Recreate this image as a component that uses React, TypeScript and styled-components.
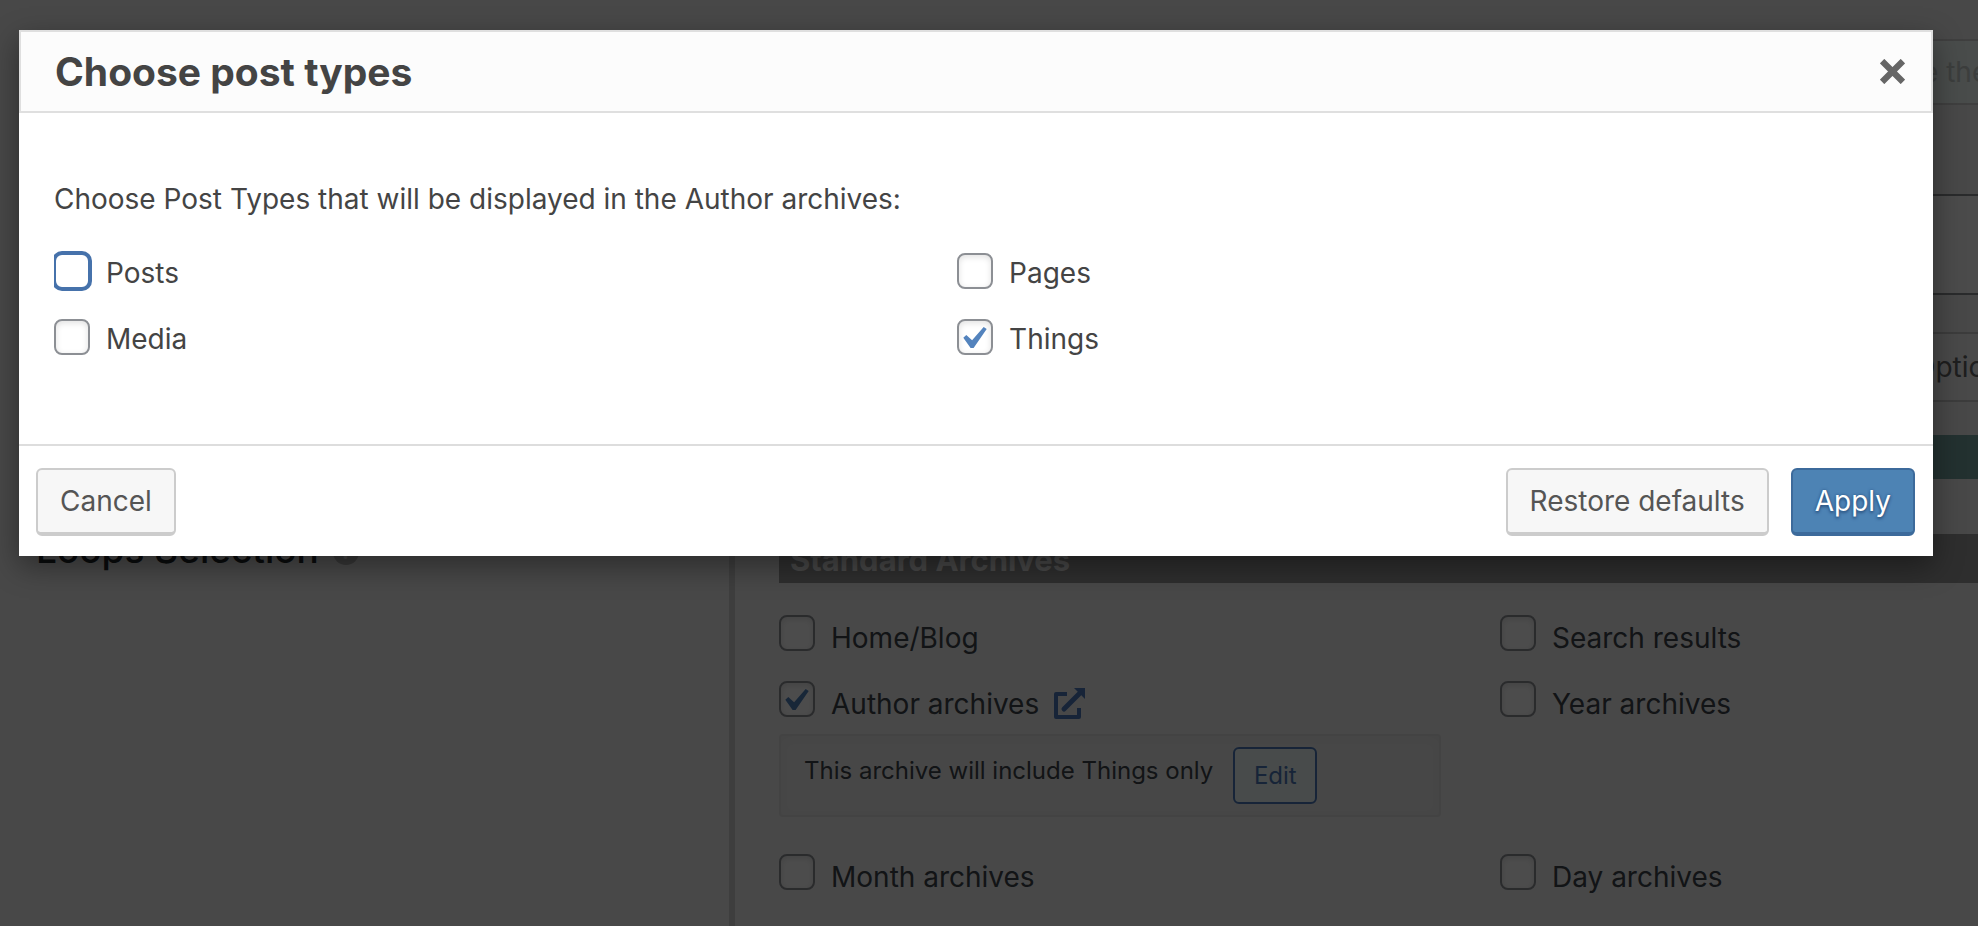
import React from "react";
import styled, { createGlobalStyle, css } from "styled-components";

const GlobalStyle = createGlobalStyle`
  *, *::before, *::after { box-sizing: border-box; }
  body {
    margin: 0;
    background: #f1f1f1;
    color: #444;
    font-family: Inter, "Liberation Sans", sans-serif;
    font-size: 28px;
    line-height: 36px;
  }
  button, input { font: inherit; }
`;

const Screen = styled.div`
  position: relative;
  height: 100vh;
  overflow: hidden;
`;

/* ---------- settings page behind the dialog ---------- */

const Page = styled.div`
  display: flex;
  flex-direction: column;
  min-height: 100%;
  color: #3c434a;
`;

const TopPanel = styled.section`
  padding: 39px 0 23px 779px;
`;

const SettingsSection = styled.section`
  display: grid;
  grid-template-columns: 735px minmax(0, 1fr);
  flex: 1;
`;

const Sidebar = styled.aside`
  display: flex;
  align-items: flex-start;
  gap: 14px;
  padding: 28px 0 0 36px;
  border-right: 6px solid #cfcfcf;
`;

const SectionTitle = styled.h2`
  margin: 0;
  font-size: 37px;
  line-height: 40px;
  font-weight: 500;
  color: #23282d;
`;

const HelpMark = styled.span`
  display: grid;
  place-items: center;
  width: 26px;
  height: 26px;
  margin-top: 9px;
  border-radius: 50%;
  background: #b8b8b8;
  color: #f1f1f1;
  font-size: 20px;
  line-height: 26px;
  font-weight: 700;
`;

const Main = styled.main`
  padding: 32px 0 0 44px;
`;

const Strip = styled.div<{ $height: number; $gap: number; $bg: string; $line?: string }>`
  display: flex;
  justify-content: flex-end;
  align-items: center;
  height: ${(p) => p.$height}px;
  margin-bottom: ${(p) => p.$gap}px;
  background: ${(p) => p.$bg};
  border: 0 solid ${(p) => p.$line ?? "transparent"};
  border-width: ${(p) => (p.$line ? "2px 0" : "0")};
`;

const StripText = styled.span<{ $muted?: boolean }>`
  width: ${(p) => (p.$muted ? 56 : 64)}px;
  overflow: hidden;
  white-space: nowrap;
  color: ${(p) => (p.$muted ? "#c8cfcc" : "#646464")};
`;

const GroupHeading = styled.h3`
  margin: 0;
  padding: 12px 11px 9px;
  background: #999;
  color: #eee;
  font-size: 31px;
  line-height: 28px;
  font-weight: 700;
`;

const ArchiveGrid = styled.div`
  display: grid;
  grid-template-columns: minmax(0, 721fr) minmax(0, 478fr);
  row-gap: 30px;
  padding-top: 32px;
`;

const OptionRow = styled.div`
  display: flex;
  align-items: flex-start;
  gap: 15px;
  height: 36px;
`;

const ArchiveLink = styled.a`
  display: block;
  margin-top: 7px;
  color: #4d7bbb;
  svg { display: block; }
`;

const Note = styled.div`
  display: flex;
  align-items: flex-start;
  gap: 20px;
  margin: 17px 59px 7px 0;
  padding: 11px 23px;
  border: 2px solid #e0e0e0;
  border-radius: 4px;
  background: #eee;
  box-shadow: inset 0 2px 14px rgba(0, 0, 0, 0.04);
  font-size: 24px;
  line-height: 48px;
`;

const EditButton = styled.button`
  width: 84px;
  height: 57px;
  padding: 0;
  border: 2px solid #4d7bbb;
  border-radius: 6px;
  background: #f2fcfa;
  color: #4d7bbb;
`;

/* ---------- tick boxes ---------- */

const Option = styled.label`
  display: flex;
  align-items: flex-start;
  gap: 16px;
  height: 36px;
`;

const OptionText = styled.span<{ $drop: number }>`
  padding-top: ${(p) => p.$drop}px;
`;

const CheckFrame = styled.span`
  display: grid;
  place-items: center;
  flex: none;
  > * { grid-area: 1 / 1; }
  svg { pointer-events: none; }
`;

const Box = styled.input<{ $focused?: boolean }>`
  appearance: none;
  width: 36px;
  height: 36px;
  margin: 0;
  border: 2px solid #8c8f94;
  border-radius: 8px;
  background: #fff;
  box-shadow: inset 0 2px 6px rgba(0, 0, 0, 0.12);
  outline: none;
  ${(p) =>
    p.$focused &&
    css`
      border-color: #4672ab;
      box-shadow: 0 0 0 2px #4672ab;
    `}
`;

interface CheckOptionProps {
  label: string;
  checked?: boolean;
  focused?: boolean;
  drop: number;
}

function CheckOption({ label, checked = false, focused, drop }: CheckOptionProps) {
  const [on, setOn] = React.useState(checked);
  return (
    <Option>
      <CheckFrame>
        <Box type="checkbox" checked={on} $focused={focused} onChange={() => setOn(!on)} />
        {on && (
          <svg width="24" height="21" viewBox="5.78 4.89 10.39 9.32" aria-hidden="true">
            <path
              fill="#5383bd"
              d="M14.83 4.89l1.34.94-5.81 8.38H9.02L5.78 9.67l1.34-1.25 2.57 2.4z"
            />
          </svg>
        )}
      </CheckFrame>
      <OptionText $drop={drop}>{label}</OptionText>
    </Option>
  );
}

/* ---------- dialog ---------- */

const Overlay = styled.div`
  position: absolute;
  inset: 0;
  padding: 30px 45px 0 19px;
  background: rgba(0, 0, 0, 0.7);
`;

const Dialog = styled.section`
  background: #fff;
  box-shadow: 0 10px 28px rgba(0, 0, 0, 0.4);
`;

const DialogHeader = styled.header`
  display: flex;
  align-items: center;
  justify-content: space-between;
  height: 83px;
  padding: 0 26px 0 34px;
  border: 2px solid #dfdfdf;
  background: #fcfcfc;
`;

const DialogTitle = styled.h1`
  margin: 0;
  font-size: 39px;
  line-height: 48px;
  font-weight: 700;
`;

const CloseButton = styled.button`
  display: block;
  padding: 0;
  border: 0;
  background: none;
  color: #666;
  svg { display: block; }
`;

const DialogBody = styled.div`
  padding: 68px 36px 89px 35px;
`;

const Intro = styled.p`
  margin: 0 0 36px;
`;

const TypeGrid = styled.div`
  display: grid;
  grid-template-columns: 49% 51%;
  row-gap: 30px;
  overflow-x: clip;
`;

const DialogFooter = styled.footer`
  display: flex;
  gap: 22px;
  padding: 22px 18px 20px 17px;
  border-top: 2px solid #ddd;
`;

const Button = styled.button<{ $primary?: boolean; $pushRight?: boolean }>`
  height: 68px;
  padding: 0 22px;
  margin-right: ${(p) => (p.$pushRight ? "auto" : "0")};
  border: 2px solid #ccc;
  border-bottom-width: 4px;
  border-radius: 6px;
  background: #f7f7f7;
  color: #555;
  ${(p) =>
    p.$primary &&
    css`
      border-color: #3c6a9b;
      background: #4d83b4;
      color: #fff;
      text-shadow: 0 2px 3px #2c5583, 0 0 3px #2c5583;
    `}
`;

export default function App() {
  return (
    <>
      <GlobalStyle />
      <Screen>
        <Page>
          <TopPanel>
            <Strip $height={66} $gap={89} $bg="#f4fdfb" $line="#d2d2d2">
              <StripText $muted>e the</StripText>
            </Strip>
            <Strip $height={101} $gap={37} $bg="#fbfbfb" $line="#8c8f94" />
            <Strip $height={70} $gap={33} $bg="#f6f6f6" $line="#c8c8c8">
              <StripText>Options</StripText>
            </Strip>
            <Strip $height={44} $gap={0} $bg="#75a3a0" />
          </TopPanel>
          <SettingsSection>
            <Sidebar>
              <SectionTitle>Loops Selection</SectionTitle>
              <HelpMark>?</HelpMark>
            </Sidebar>
            <Main>
              <GroupHeading>Standard Archives</GroupHeading>
              <ArchiveGrid>
                <CheckOption label="Home/Blog" drop={5} />
                <CheckOption label="Search results" drop={5} />
                <div>
                  <OptionRow>
                    <CheckOption label="Author archives" checked drop={5} />
                    <ArchiveLink href="#author" aria-label="Open author archives">
                      <svg width="31" height="31" viewBox="0 0 31 31" fill="none" aria-hidden="true">
                        <path
                          d="M13 6H2v23h23v-9"
                          stroke="currentColor"
                          strokeWidth="4"
                          strokeLinejoin="round"
                        />
                        <path d="M10 21L25 6" stroke="currentColor" strokeWidth="5" strokeLinecap="round" />
                        <path d="M20 0h11v11z" fill="currentColor" />
                      </svg>
                    </ArchiveLink>
                  </OptionRow>
                  <Note>
                    <span>This archive will include Things only</span>
                    <EditButton type="button">Edit</EditButton>
                  </Note>
                </div>
                <CheckOption label="Year archives" drop={5} />
                <CheckOption label="Month archives" drop={5} />
                <CheckOption label="Day archives" drop={5} />
              </ArchiveGrid>
            </Main>
          </SettingsSection>
        </Page>

        <Overlay>
          <Dialog role="dialog" aria-modal="true" aria-labelledby="dialog-title">
            <DialogHeader>
              <DialogTitle id="dialog-title">Choose post types</DialogTitle>
              <CloseButton type="button" aria-label="Close">
                <svg width="25" height="25" viewBox="0 0 24 24" aria-hidden="true">
                  <path d="M2 2l20 20M22 2L2 22" stroke="currentColor" strokeWidth="6" />
                </svg>
              </CloseButton>
            </DialogHeader>
            <DialogBody>
              <Intro>Choose Post Types that will be displayed in the Author archives:</Intro>
              <TypeGrid>
                <CheckOption label="Posts" focused drop={2} />
                <CheckOption label="Pages" drop={2} />
                <CheckOption label="Media" drop={2} />
                <CheckOption label="Things" checked drop={2} />
              </TypeGrid>
            </DialogBody>
            <DialogFooter>
              <Button type="button" $pushRight>
                Cancel
              </Button>
              <Button type="button">Restore defaults</Button>
              <Button type="button" $primary>
                Apply
              </Button>
            </DialogFooter>
          </Dialog>
        </Overlay>
      </Screen>
    </>
  );
}
